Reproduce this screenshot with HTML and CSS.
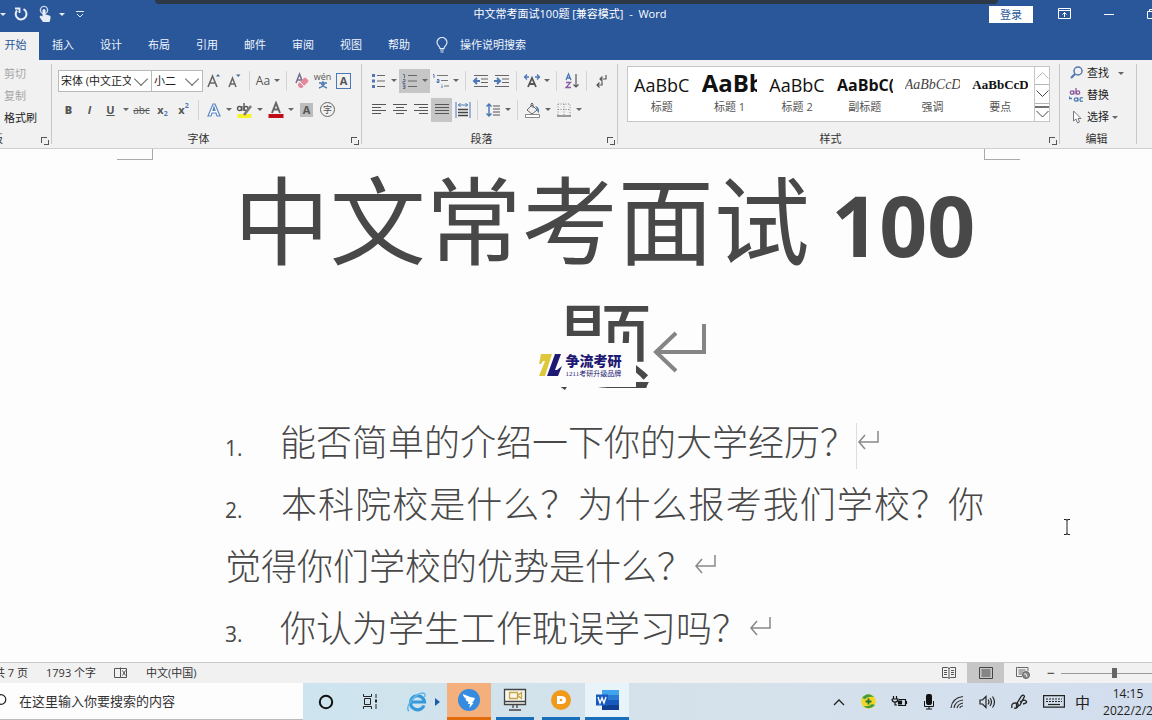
FILE: index.html
```html
<!DOCTYPE html>
<html lang="zh-CN">
<head>
<meta charset="utf-8">
<title>中文常考面试100题 - Word</title>
<link rel="stylesheet" href="styles.css">
</head>
<body>
<header class="titlebar">
  <div class="quick">
    <button class="caret" aria-label="撤消选项"></button>
    <button class="q" aria-label="重做"><svg width="16" height="16" viewBox="0 0 16 16" fill="none" stroke="#e8eef8" stroke-width="2"><path d="M10.500 3.200A5.400 5.400 0 1 1 4 4.500"/><path d="M2 2.500h4.500V7" stroke-width="1.800"/></svg></button>
    <button class="q" aria-label="触摸模式"><svg width="16" height="18" viewBox="0 0 16 18"><circle cx="7" cy="5" r="3.600" fill="none" stroke="#c6d6ee" stroke-width="1.400"/><path d="M5.500 5q1.500-2 3 0v4.500l4 1q1.500.5 1 3l-1 3.500H6l-3.500-5 1-1.500 2 1z" fill="#e8eef8"/></svg></button>
    <button class="caret" aria-label="触摸选项"></button>
    <button class="q" aria-label="自定义"><svg width="10" height="10" viewBox="0 0 10 10" fill="none" stroke="#e8eef8"><path d="M1 2.500h8M2 5l3 3 3-3"/></svg></button>
  </div>
  <h1 class="name">中文常考面试100题 [兼容模式] &nbsp;-&nbsp; Word</h1>
  <div class="winbtns">
    <button class="login">登录</button>
    <button aria-label="功能区选项"><svg width="14" height="12" viewBox="0 0 14 12" fill="none" stroke="#fff"><path d="M.5.5h12v10H.5zM.5 2.500h12M6.500 9V4.500M4.500 6.500l2-2 2 2"/></svg></button>
    <button aria-label="最小化"><svg width="12" height="12" viewBox="0 0 12 12" stroke="#fff"><path d="M1 6.500h10"/></svg></button>
    <button aria-label="还原"><svg width="12" height="12" viewBox="0 0 12 12" fill="none" stroke="#fff"><path d="M1.500 3.500h7v7h-7zM3.500 3V1.500h7v7H9"/></svg></button>
  </div>
</header>
<div class="sharebar"></div>
<nav class="tabs">
  <a href="#" class="on">开始</a><a href="#">插入</a><a href="#">设计</a><a href="#">布局</a><a href="#">引用</a><a href="#">邮件</a><a href="#">审阅</a><a href="#">视图</a><a href="#">帮助</a>
  <a href="#" class="tell"><svg width="12" height="16" viewBox="0 0 12 16" fill="none" stroke="#dfe9f7" stroke-width="1.200"><path d="M4 11.500C4 9 1 8.500 1 5.500a5 5 0 0 1 10 0C11 8.500 8 9 8 11.500zM4 13h4M4.500 15h3"/></svg>操作说明搜索</a>
</nav>

<section class="ribbon">
  <div class="group clip">
    <button class="off">剪切</button><button class="off">复制</button><button>格式刷</button>
    <div class="label"><span>剪贴板</span></div><i class="launch"></i>
  </div>

  <div class="group font">
    <div class="row">
      <div class="combo wide"><select aria-label="字体"><option>宋体 (中文正文)</option></select></div>
      <div class="combo"><select aria-label="字号"><option>小二</option></select></div>
      <button class="b" aria-label="增大字号"><svg width="18" height="18" viewBox="0 0 18 18" fill="none" stroke="#666" stroke-width="1.600"><path d="M3 15 7.500 4 12 15M5 11h5"/><path d="M11 4.500 13 2l2 2.500z" fill="#456c9c" stroke="none"/></svg></button>
      <button class="b" aria-label="减小字号"><svg width="18" height="18" viewBox="0 0 18 18" fill="none" stroke="#666" stroke-width="1.500"><path d="M3 15 6.500 6 10 15M4.500 12h4"/><path d="M10 2.500h4.500L12.300 5z" fill="#456c9c" stroke="none"/></svg></button>
      <i class="sep"></i>
      <button class="b aa">Aa</button><button class="caret" aria-label="更改大小写"></button>
      <i class="sep"></i>
      <button class="b" aria-label="清除格式"><svg width="18" height="18" viewBox="0 0 18 18"><path d="M3 11 6.500 2 10 11M4.500 8h4" fill="none" stroke="#776d8c" stroke-width="1.500"/><path d="m5 12 6-6q1-1 2 0l2 2q1 1 0 2l-6 6H7l-2-2z" fill="#e58a9c"/><path d="m7 10 4 4" stroke="#fff"/></svg></button>
      <button class="b wen" aria-label="拼音指南"><span>wén</span><svg width="10" height="8" viewBox="0 0 10 8" fill="none" stroke="#4c79b4" stroke-width="1.300"><path d="M1 2h8M5 0v2M3 2q2 4 6 5M7 2Q5 6 1 7"/></svg></button>
      <button class="b" aria-label="字符边框"><span class="boxed">A</span></button>
    </div>
    <div class="row">
      <button class="b g"><b>B</b></button><button class="b g"><em>I</em></button><button class="b g"><u>U</u></button><button class="caret" aria-label="下划线样式"></button>
      <button class="b strike"><s>abc</s></button><button class="b g">x<sub>2</sub></button><button class="b g">x<sup>2</sup></button>
      <i class="sep"></i>
      <button class="b" aria-label="文本效果"><svg width="18" height="18" viewBox="0 0 18 18"><path d="M3 15 8 3h2l5 12h-3l-1-3H7l-1 3zM8 9.500h2L9 6z" fill="#fff" stroke="#5b88c4" stroke-width="1.200"/></svg></button><button class="caret" aria-label="文本效果选项"></button>
      <button class="b" aria-label="突出显示"><svg width="18" height="18" viewBox="0 0 18 18" fill="none"><path d="M1.500 13h14v4h-14z" fill="#f7f22b"/><g stroke="#555" stroke-width="1.400"><circle cx="3.500" cy="7.500" r="2"/><path d="M5.800 5v5M8 2v8"/><circle cx="10" cy="7.500" r="2"/></g><path d="m8 14 7-9" stroke="#777" stroke-width="2.500"/></svg></button><button class="caret" aria-label="突出显示颜色"></button>
      <button class="b" aria-label="字体颜色"><svg width="18" height="18" viewBox="0 0 18 18" fill="none"><path d="M1.500 13h15v4h-15z" fill="#c00d18"/><path d="M5 12 9 2l4 10M6.500 8.500h5" stroke="#666" stroke-width="2"/></svg></button><button class="caret" aria-label="颜色选项"></button>
      <button class="b" aria-label="字符底纹"><span class="shade">A</span></button>
      <button class="b" aria-label="带圈字符"><span class="round">字</span></button>
    </div>
    <div class="label"><span>字体</span></div><i class="launch"></i>
  </div>

  <div class="group para">
    <div class="row">
      <button class="b" aria-label="项目符号"><svg width="16" height="16" viewBox="0 0 16 16"><g fill="#4c79b4"><path d="M1 1h3v3H1zM1 6.500h3v3H1zM1 12h3v3H1z"/></g><path d="M6 2.500h8M6 8h8M6 13.500h8" stroke="#666" stroke-width="1.200"/></svg></button><button class="caret" aria-label="项目符号选项"></button>
      <button class="b sel" aria-label="编号"><svg width="16" height="16" viewBox="0 0 16 16" fill="none" stroke="#5c7191"><path d="M1 1.500h1.500V5M1 6.500h2v2H1v2h2.500M1 12h2v3.500H1M1 13.700h2"/><path d="M6 2.500h9M6 8h9M6 13.500h9" stroke="#666" stroke-width="1.200"/></svg></button><button class="caret sel" aria-label="编号选项"></button>
      <button class="b" aria-label="多级列表"><svg width="18" height="16" viewBox="0 0 18 16" fill="none" stroke="#4c79b4"><path d="M1 1.500h1V5M5 6.500h2v3H5V8h2M10 11v.5M10 12.500V15"/><path d="M5 2.500h11M9 7.500h7M12 13h5" stroke="#777" stroke-width="1.200"/></svg></button><button class="caret" aria-label="多级选项"></button>
      <i class="sep"></i>
      <button class="b" aria-label="减少缩进"><svg width="18" height="14" viewBox="0 0 18 14" fill="none" stroke="#666" stroke-width="1.200"><path d="M2 1.500h14M9 5h7M9 8.500h7M2 12.500h14"/><path d="M8 7H2M5 4 2 7l3 3" stroke="#4c79b4" stroke-width="2"/></svg></button>
      <button class="b" aria-label="增加缩进"><svg width="18" height="14" viewBox="0 0 18 14" fill="none" stroke="#666" stroke-width="1.200"><path d="M2 1.500h14M9 5h7M9 8.500h7M2 12.500h14"/><path d="M1 7h6M4 4l3 3-3 3" stroke="#4c79b4" stroke-width="2"/></svg></button>
      <i class="sep"></i>
      <button class="b" aria-label="中文版式"><svg width="18" height="16" viewBox="0 0 18 16" fill="none"><path d="M5 14 9 5l4 9M6.500 11h5" stroke="#555" stroke-width="1.800"/><path d="M6 4H2M4 1.500 1.500 4 4 6.500M12 4h4M14 1.500 16.500 4 14 6.500" stroke="#4c79b4" stroke-width="1.300"/></svg></button><button class="caret" aria-label="版式选项"></button>
      <i class="sep"></i>
      <button class="b" aria-label="排序"><svg width="16" height="18" viewBox="0 0 16 18" fill="none"><path d="M2 8 4.500 2 7 8M3 6h3" stroke="#4c79b4" stroke-width="1.300"/><path d="M2 10.500h4.500L2 15.500h5" stroke="#8b5ba8" stroke-width="1.300"/><path d="M12 2v13M9.500 12.500 12 15l2.500-2.500" stroke="#555" stroke-width="1.200"/></svg></button>
      <i class="sep"></i>
      <button class="b" aria-label="显示标记"><svg width="14" height="14" viewBox="0 0 14 14" fill="none" stroke="#555" stroke-width="1.200"><path d="M11 1v4H5M7.500 2.500 5 5l2.500 2.500M7 8v3H2M4.500 8.500 2 11l2.500 2.500"/></svg></button>
    </div>
    <div class="row">
      <button class="b" aria-label="左对齐"><svg width="14" height="12" viewBox="0 0 14 12" stroke="#555"><path d="M0 .5h14M0 3.500h9M0 6.500h14M0 9.500h9"/></svg></button>
      <button class="b" aria-label="居中"><svg width="14" height="12" viewBox="0 0 14 12" stroke="#555"><path d="M0 .5h14M3 3.500h8M0 6.500h14M3 9.500h8"/></svg></button>
      <button class="b" aria-label="右对齐"><svg width="14" height="12" viewBox="0 0 14 12" stroke="#555"><path d="M0 .5h14M5 3.500h9M0 6.500h14M5 9.500h9"/></svg></button>
      <button class="b sel" aria-label="两端对齐"><svg width="14" height="12" viewBox="0 0 14 12" stroke="#555"><path d="M0 .5h14M0 3.500h14M0 6.500h14M0 9.500h14"/></svg></button>
      <button class="b" aria-label="分散对齐"><svg width="16" height="16" viewBox="0 0 16 16" fill="none" stroke="#4c79b4"><path d="M1 0v16M15 0v16M3 3h10M5.500 1l-2 2 2 2M10.500 1l2 2-2 2"/><path d="M3 7.500h10M3 10.500h10M3 13.500h10" stroke="#444" stroke-width="1.500"/></svg></button>
      <i class="sep"></i>
      <button class="b" aria-label="行距"><svg width="16" height="16" viewBox="0 0 16 16" fill="none" stroke="#4c79b4" stroke-width="1.500"><path d="M4 2v12M1.500 4.500 4 2l2.500 2.500M1.500 11.500 4 14l2.500-2.500"/><path d="M8 4h7M8 7h7M8 10h7M8 13h7" stroke="#555" stroke-width="1"/></svg></button><button class="caret" aria-label="行距选项"></button>
      <i class="sep"></i>
      <button class="b" aria-label="底纹"><svg width="18" height="16" viewBox="0 0 18 16" fill="none" stroke="#666"><path d="m3 8 5-5 5 5-5 4zM7 5V2q1-2 2 0v4"/><path d="M11 4q5 1 4 7-2-1-2-4z" fill="#4c79b4" stroke="none"/><path d="M1.500 12.500h14v3h-14z" fill="#fff" stroke="#888"/></svg></button><button class="caret" aria-label="底纹选项"></button>
      <button class="b" aria-label="边框"><svg width="14" height="14" viewBox="0 0 14 14" fill="none" stroke="#888"><path stroke-dasharray="1 1.500" d="M1 1h12v11M1 1v11M1 6.500h12M7 1v11"/><path d="M0 13h14" stroke="#444"/></svg></button><button class="caret" aria-label="边框选项"></button>
    </div>
    <div class="label"><span>段落</span></div><i class="launch"></i>
  </div>

  <div class="group styles">
    <div class="gallery">
      <button><span class="sample">AaBbC</span><span>标题</span></button>
      <button><span class="sample h1">AaBb</span><span>标题 1</span></button>
      <button><span class="sample">AaBbC</span><span>标题 2</span></button>
      <button><span class="sample bold">AaBbC(</span><span>副标题</span></button>
      <button><span class="sample ital">AaBbCcDt</span><span>强调</span></button>
      <button><span class="sample serif">AaBbCcD</span><span>要点</span></button>
      <div class="scroll">
        <button aria-label="上一行"><svg width="13" height="7" viewBox="0 0 13 7" fill="none" stroke="#bbb"><path d="m.5 6.500 6-6 6 6"/></svg></button>
        <button aria-label="下一行"><svg width="13" height="7" viewBox="0 0 13 7" fill="none" stroke="#444"><path d="m.5.5 6 6 6-6"/></svg></button>
        <button aria-label="更多"><svg width="15" height="12" viewBox="0 0 15 12" fill="none" stroke="#444"><path d="M0 1h15" stroke-width="1.500"/><path d="m1.500 5 6 6 6-6"/></svg></button>
      </div>
    </div>
    <div class="label"><span>样式</span></div><i class="launch"></i>
  </div>

  <div class="group edit">
    <button><svg width="15" height="14" viewBox="0 0 15 14" fill="none" stroke="#5279ad"><circle cx="9" cy="5" r="4" stroke-width="1.500"/><path d="m6 8-4 4" stroke-width="2.200"/></svg>查找<i class="tri"></i></button>
    <button><svg width="15" height="15" viewBox="0 0 15 15" fill="none" stroke-width="1.300"><g stroke="#8a5aa0"><circle cx="3" cy="4.500" r="1.700"/><path d="M4.800 2.500v4M7 0v6.500"/><circle cx="9" cy="4.500" r="1.700"/></g><g stroke="#4c79b4"><path d="M.5 8.500v2h2.500"/><circle cx="7" cy="11.500" r="1.700"/><path d="M8.800 9.500v4M14 10q-3-1-3 1.500t3 1.500"/></g></svg>替换</button>
    <button><svg width="15" height="14" viewBox="0 0 15 14" fill="#fff" stroke="#777"><path d="M4.500 1v10l2.500-2 1.500 4 2-1-1.500-3.500h3z"/></svg>选择<i class="tri near"></i></button>
    <div class="label"><span>编辑</span></div>
  </div>
</section>

<main class="doc">
  <div class="corners"><i></i><i></i></div>
  <h2 class="heading">中文常考面试 <b>100</b> <span class="last">题<svg class="mark" width="54" height="50" viewBox="0 0 54 50" fill="none" stroke="#858585" stroke-width="4"><path d="M51 1v28H4M23 10 3 29l20 19"/></svg><span class="brand">
      <svg width="23" height="22" viewBox="0 0 23 22"><path d="M2 0h11L6 22H0L6 7H4L2 10H0z" fill="#ddc83c"/><path d="M16 0h6l-6 16h2l5-4-4 10H8z" fill="#1e1972"/></svg>
      <span class="bt"><strong>争流考研</strong><small>1211考研升级品牌</small></span>
    </span></span></h2>
  <ol class="questions">
    <li><span class="num">1.</span>能否简单的介绍一下你的大学经历？<i class="ins"></i><svg class="ret" width="22" height="26" viewBox="0 0 22 26" fill="none" stroke="#888" stroke-width="1.500"><path d="M21 1v11H2M8 5l-6 7 6 7"/></svg></li>
    <li><span class="num">2.</span>本科院校是什么？为什么报考我们学校？你觉得你们学校的优势是什么？<svg class="ret" width="22" height="26" viewBox="0 0 22 26" fill="none" stroke="#888" stroke-width="1.500"><path d="M21 1v11H2M8 5l-6 7 6 7"/></svg></li>
    <li><span class="num">3.</span>你认为学生工作耽误学习吗？<svg class="ret" width="22" height="26" viewBox="0 0 22 26" fill="none" stroke="#888" stroke-width="1.500"><path d="M21 1v11H2M8 5l-6 7 6 7"/></svg></li>
  </ol>
  <svg class="ibeam" width="8" height="16" viewBox="0 0 8 16" fill="none" stroke="#222"><path d="M1 .5h2.500l.5 1 .5-1H7M4 1v14M1 15.500h2.500l.5-1 .5 1H7"/></svg>
</main>

<footer class="status">
  <span class="pages">共 7 页</span><span>1793 个字</span>
  <svg width="14" height="12" viewBox="0 0 14 12" fill="none" stroke="#555"><path d="M6.500 1.500H.5v9h6V.5M6.500 1.500h6v9h-6M8.500 3.500l3 5M11.500 3.500l-3 5"/></svg>
  <span>中文(中国)</span>
  <div class="views">
    <button aria-label="阅读视图"><svg width="14" height="12" viewBox="0 0 14 12" fill="none" stroke="#555"><path d="M.5.5h5l1.500 1 1.500-1h5v10h-5l-1.500 1-1.500-1h-5zM7 1v10M2 3.500h3M2 5.500h3M2 7.500h3M9 3.500h3M9 5.500h3M9 7.500h3"/></svg></button>
    <button class="sel" aria-label="页面视图"><svg width="14" height="12" viewBox="0 0 14 12" fill="none" stroke="#444"><path d="M.5.5h13v11H.5zM2.500 3h9M2.500 5h9M2.500 7h9M2.500 9h9"/></svg></button>
    <button aria-label="Web 视图"><svg width="14" height="12" viewBox="0 0 14 12" fill="none" stroke="#666"><path d="M12 4V.5H.5v9H6M2.500 3h7M2.500 5h5M2.500 7H6"/><circle cx="10" cy="8" r="3.500" fill="#888"/><path d="M8 7h2l1 3" stroke="#eee"/></svg></button>
    <button class="minus" aria-label="缩小">−</button>
    <input type="range" aria-label="缩放" value="50">
  </div>
</footer>

<div class="taskbar">
  <label class="find"><svg width="12" height="14" viewBox="0 0 12 14" fill="none" stroke="#222" stroke-width="1.200"><circle cx="6" cy="5.500" r="4.800"/><path d="m3 9-3 4"/></svg><input type="text" placeholder="在这里输入你要搜索的内容" aria-label="搜索"></label>
  <button class="app" aria-label="Cortana"><svg width="16" height="16" viewBox="0 0 16 16" fill="none" stroke="#111" stroke-width="2"><circle cx="8" cy="8" r="6.200"/></svg></button>
  <button class="app" aria-label="任务视图"><svg width="17" height="15" viewBox="0 0 17 15" fill="none" stroke="#222"><path d="M1.500 0v2.500h8V0M2.500 4.500h6v6h-6zM1.500 15v-2.500h8V15M14 0v4M14 10v5" /><path d="M14 5.500v3" stroke-width="2"/></svg></button>
  <button class="app ie" aria-label="Internet Explorer"><svg width="22" height="22" viewBox="0 0 22 22" fill="none"><path d="M18 14.500A7 7 0 1 1 18.500 11H6" stroke="#3599dc" stroke-width="3.200"/><path d="M3 20C-2 17 9 2 17 2q3 .3 1.500 4" stroke="#63b8ea" stroke-width="1.500"/></svg><svg width="5" height="8" viewBox="0 0 5 8"><path d="m0 0 5 4-5 4z" fill="#1c5ca8"/></svg></button>
  <button class="app ding" aria-label="钉钉"><svg width="22" height="22" viewBox="0 0 22 22"><circle cx="11" cy="11" r="11" fill="#348be0"/><path d="M5 5q6 3 12 4-1 3-3 5h1.500l-4 5 .5-4h-2l.5-2q-3-1-3-3h1Q5 8 5 5z" fill="#fff"/></svg></button>
  <button class="app run" aria-label="录屏"><svg width="24" height="24" viewBox="0 0 24 24" fill="none" stroke="#444" stroke-width="1.300"><path d="M1.500 1.500h21v15h-21z" fill="#f7f7ef"/><path d="M1.500 13.500h21M10 17v3M14 17v3M6 22h12"/><path d="M6.500 4.500h8v6h-8zM14.500 7.500l4-3v6l-4-3z" stroke="#c9a545"/></svg></button>
  <button class="app run" aria-label="播放器"><svg width="20" height="20" viewBox="0 0 20 20"><circle cx="10" cy="10" r="10" fill="#f09a1c"/><path d="M6 6h4q5 0 5 4t-5 4H6z" fill="#fff"/><circle cx="10" cy="10" r="1.300" fill="#f09a1c"/></svg></button>
  <button class="app run word" aria-label="Word"><svg width="23" height="20" viewBox="0 0 23 20"><path d="M6 0h17v5H6z" fill="#41a5ee"/><path d="M6 5h17v5H6z" fill="#2b7cd3"/><path d="M6 10h17v5H6z" fill="#185abd"/><path d="M6 15h17v5H6z" fill="#103f91"/><path d="M0 4.500h12v11H0z" fill="#185abd"/><path d="m2 7 2 6 2-5 2 5 2-6" fill="none" stroke="#fff" stroke-width="1.400"/></svg></button>
  <div class="tray">
    <svg width="12" height="8" viewBox="0 0 12 8" fill="none" stroke="#222" stroke-width="1.300"><path d="m1 7 5-5 5 5"/></svg>
    <svg width="15" height="15" viewBox="0 0 15 15"><circle cx="7.500" cy="7.500" r="7.300" fill="#f1d728"/><path d="M1 4Q7-3 13 3q-6-1-9 2zM14 11q-5 6-12 1 6 1 9-2z" fill="#3e9c45"/><path d="M7.500 4.500v6M4.500 7.500h6" stroke="#22732d" stroke-width="1.800"/></svg>
    <svg width="17" height="12" viewBox="0 0 17 12" fill="none" stroke="#111" stroke-width="1.200"><path d="M8 3.500h6.500v6H7M15.500 5v3M2.500 0v3M5.500 0v3M1 3h6q0 3-3 3t-3-3M4 6v3h2"/><path d="M7.500 5h3v3h-3z" fill="#111"/></svg>
    <svg width="12" height="16" viewBox="0 0 12 16" fill="#111"><rect x="3" y="0" width="6" height="11" rx="2"/><path d="M1.500 7v5.500h9V7M6 12v3M3 15h6" fill="none" stroke="#111"/></svg>
    <svg width="14" height="14" viewBox="0 0 14 14" fill="none" stroke="#333" stroke-width="1.200"><path d="M1 13Q2 3 13 1.500M4 13q1-7 9-8M7 13q1-4 6-5M10 13q0-2 3-2"/></svg>
    <svg width="17" height="14" viewBox="0 0 17 14" fill="none" stroke="#222" stroke-width="1.200"><path d="M1 5h2.500L7 1.500v11L3.500 9H1zM9 4.500q2 2.500 0 5M11 3q3 4 0 8M13.500 1.500q4 5.500 0 11"/></svg>
    <svg width="17" height="16" viewBox="0 0 17 16" fill="none" stroke="#222" stroke-width="1.300"><path d="m5.500 10 5-8q2-2 3 .5L9 11l-3.500 2zM1 14q-1-5 3-5t3 3-4 2M9 8q4-3 6-1t-3 3"/></svg>
    <svg class="kb" width="22" height="13" viewBox="0 0 22 13" fill="none" stroke="#222" stroke-width="1.200"><path d="M.6.6h20.800v11.500H.6z"/><path d="M3 4h16M3 6.500h16" stroke-dasharray="2 1"/><path d="M5 9.500h12"/></svg>
    <span class="ime">中</span>
    <time>14:15<br>2022/2/2</time>
  </div>
</div>
</body>
</html>
```

FILE: styles.css
```css
* { box-sizing: border-box; }
html, body { height: 100%; }
body {
  margin: 0;
  display: flex;
  flex-direction: column;
  overflow: hidden;
  background: #fdfdfd;
  color: #333;
  font: 11px/16px "Open Sans", "Noto Sans CJK SC", sans-serif;
}
button, select, input { font: inherit; color: inherit; }
button { border: 0; padding: 0; background: none; white-space: nowrap; }
svg { flex: none; display: block; }
a { color: inherit; text-decoration: none; }

/* title bar */
.titlebar {
  display: flex;
  align-items: center;
  height: 32px;
  padding-bottom: 4px;
  background: #2a579a;
  color: #fff;
}
.quick { flex: 1; display: flex; align-items: center; margin-left: -2px; }
.q { display: flex; justify-content: center; width: 24px; }
.quick .caret { margin-right: 1px; }
.name { margin: 0; padding-right: 16px; font-size: 11px; font-weight: 400; }
.winbtns { flex: 1; display: flex; justify-content: flex-end; align-items: center; gap: 31px; margin-right: -6px; }
.login { width: 44px; height: 17px; margin-right: -6px; background: #fff; color: #2a579a; line-height: 17px; }
.sharebar {
  position: absolute;
  top: 0;
  left: 155px;
  right: 154px;
  height: 4px;
  border-radius: 0 0 4px 4px;
  background: #2d3a46;
}

.caret { display: flex; justify-content: center; align-items: center; width: 10px; height: 21px; flex: none; }
.caret::after, .tri {
  content: "";
  border: 3px solid transparent;
  border-top-color: #666;
  border-bottom: 0;
}
.quick .caret::after { border-top-color: #e8eef8; }

/* tabs */
.tabs { display: flex; height: 28px; background: #2a579a; color: #f0f5fc; flex: none; }
.tabs a { width: 48px; line-height: 25px; text-align: center; }
.tabs .on { width: 39px; padding-right: 8px; background: #f1f1f1; color: #2a579a; }
.tabs .tell { display: flex; align-items: center; gap: 12px; width: auto; margin-left: 13px; padding-bottom: 3px; }

/* ribbon */
.ribbon {
  display: flex;
  flex: none;
  height: 89px;
  padding-top: 4px;
  background: #f1f1f1;
  border-bottom: 1px solid #cfcfcf;
}
.group { position: relative; display: flex; flex-direction: column; border-right: 1px solid #c8c8c8; height: 80px; }
.label { margin-top: auto; margin-bottom: -3px; text-align: center; }
.launch {
  position: absolute;
  right: 4px;
  bottom: 1px;
  width: 6px;
  height: 6px;
  border: 1px solid #555;
  border-right: 0;
  border-bottom: 0;
}
.launch::after { content: ""; position: absolute; left: 2px; top: 2px; width: 4px; height: 4px; border: solid #555; border-width: 0 1px 1px 0; }
.clip { width: 52px; align-items: flex-start; padding-left: 4px; flex: none; }
.clip button { height: 22px; line-height: 18px; padding-bottom: 3px; color: #222; }
.clip .off { color: #a5a5a5; }
.clip .label { margin-left: -34px; }
.font { width: 310px; padding-left: 6px; flex: none; }
.para { width: 256px; padding-left: 6px; flex: none; }
.font .label, .para .label { padding-right: 22px; }
.styles { flex: 1; min-width: 0; padding: 2px 9px 0; }
.styles .label { padding-right: 16px; }
.edit { width: 77px; margin-right: 15px; padding-left: 9px; flex: none; }
.row { display: flex; align-items: center; height: 28px; padding-top: 5px; }
.row + .row { height: 30px; }
.b { display: flex; justify-content: center; align-items: center; width: 21px; height: 24px; flex: none; color: #555; }
.sel { background: #c6c6c6; height: 24px; }
.sep { width: 1px; height: 20px; margin: 0 4px; background: #d5d5d5; flex: none; }
.combo { width: 52px; height: 22px; position: relative; background: #fff; border: 1px solid #b9b9b9; }
.combo.wide { width: 93px; border-right: 0; }
.combo::after {
  content: "";
  position: absolute;
  right: 5px;
  top: 3px;
  width: 9px;
  height: 9px;
  border: solid #666;
  border-width: 0 1px 1px 0;
  transform: rotate(45deg);
}
.combo select { appearance: none; width: calc(100% - 20px); height: 20px; padding: 0 0 0 2px; border: 0; background: none; display: block; overflow: hidden; text-overflow: clip; color: #222; }
.aa { width: 18px; font-size: 12px; }
.wen { flex-direction: column; font-size: 9px; line-height: 9px; }
.boxed { width: 15px; border: 1px solid #4c79b4; font-weight: 700; line-height: 14px; }
.shade { width: 13px; background: #bdbdbd; font-weight: 700; line-height: 14px; }
.round { width: 15px; border: 1px solid #666; border-radius: 50%; font-size: 9px; line-height: 13px; }
.g { font-weight: 700; font-size: 11px; align-items: center; }
.g sub, .g sup { font-size: 7px; line-height: 7px; color: #4c79b4; }
.g sub { margin-top: 8px; }
.g sup { margin-bottom: 8px; }
.strike { font-size: 10px; }

.gallery { display: flex; height: 56px; background: #fff; border: 1px solid #c6c6c6; }
.gallery > button { flex: 1; min-width: 0; padding: 0 6px; display: flex; flex-direction: column; color: #555; overflow: hidden; }
.gallery > button > span { width: 100%; line-height: 16px; }
.gallery .sample { height: 32px; padding-top: 2px; line-height: 32px; font-size: 18px; color: #111; text-align: left; overflow: hidden; }
.gallery .h1 { font-size: 24px; font-weight: 700; line-height: 28px; }
.gallery .bold { font-size: 16px; font-weight: 700; }
.gallery .ital { font: italic 14px/32px "Liberation Serif", serif; color: #444; }
.gallery .serif { font: bold 13px/32px "Liberation Serif", serif; }
.scroll { display: flex; flex-direction: column; width: 15px; border-left: 1px solid #c6c6c6; }
.scroll button { flex: 1; display: flex; justify-content: center; align-items: center; overflow: hidden; }
.scroll button + button { border-top: 1px solid #b5b5b5; }
.edit button { display: flex; align-items: center; gap: 3px; height: 22px; padding-bottom: 4px; color: #222; }
.tri { margin-left: 6px; }
.tri.near { margin-left: 0; }
.edit .label { padding-right: 12px; }

/* document */
.doc { position: relative; flex: 1; min-height: 0; overflow: hidden; padding: 0 168px 0 153px; color: #484848; }
.corners { display: flex; justify-content: space-between; height: 11px; margin: 0 -36px; }
.corners i { width: 36px; height: 11px; border: solid #aaa; border-width: 0 1px 1px 0; }
.corners i + i { border-width: 0 0 1px 1px; }
.heading {
  margin: -7px 0 0 72px;
  text-align: center;
  font: 400 96px/125px "Noto Sans CJK SC", sans-serif;
}
.heading b { font-family: "Open Sans", sans-serif; font-size: 84px; line-height: 1; }
.last { position: relative; display: inline-block; }
.mark { position: absolute; left: 96px; top: 45px; }
.brand {
  position: absolute;
  left: -20px;
  top: 65px;
  display: flex;
  align-items: center;
  gap: 4px;
  width: 99px;
  height: 44px;
  padding-left: 2px;
  background: #fdfdfd;
  color: #1e1972;
  text-align: left;
}
.bt { display: flex; flex-direction: column; white-space: nowrap; }
.bt strong { font-size: 14px; line-height: 18px; font-weight: 900; }
.bt small { font-size: 7px; line-height: 10px; font-family: "Liberation Serif", "Noto Sans CJK SC", serif; }
.questions {
  margin: 6px 0 0 72px;
  padding: 0;
  list-style: none;
  text-align: justify;
  font: 300 36px/62px "Noto Sans CJK SC", sans-serif;
}
.num { display: inline-block; width: 55px; font: 400 21px/21px "Open Sans", sans-serif; }
.ret { display: inline-block; margin-left: 1px; vertical-align: 0; }
.ins { display: inline-block; width: 1px; height: 46px; margin-right: -1px; background: #ddd; vertical-align: middle; }
.ibeam { position: absolute; right: 81px; top: 370px; }

/* status bar */
.status { display: flex; align-items: center; gap: 18px; flex: none; height: 21px; background: #f1f1f1; border-top: 1px solid #c8c8c8; overflow: hidden; }
.pages { margin-left: -6px; }
.views { display: flex; align-items: center; margin-left: auto; margin-right: -15px; }
.views button { display: flex; justify-content: center; align-items: center; width: 37px; height: 20px; }
.views .minus { width: 20px; font-size: 14px; }
.views input { appearance: none; width: 106px; height: 20px; margin: 0; background: linear-gradient(#999, #999) center / 100% 1px no-repeat; }
.views input::-webkit-slider-thumb { appearance: none; width: 5px; height: 10px; background: #666; }

/* taskbar */
.taskbar { display: flex; flex: none; height: 37px; background: linear-gradient(90deg, #cde4ee 26%, #d5e1ea 60%, #d2deee); color: #222; overflow: hidden; }
.find { display: flex; align-items: center; gap: 12px; width: 303px; margin-right: 1px; background: #fdfdfd; border-bottom: 1px solid #bbb; flex: none; }
.find svg { margin-left: -5px; }
.find input { width: 240px; padding: 0; border: 0; background: none; font-size: 13px; outline: 0; }
.find input::placeholder { color: #333; opacity: 1; }
.app { display: flex; justify-content: center; align-items: center; width: 44px; flex: none; }
.app.ie { width: 55px; gap: 7px; padding-left: 7px; }
.app.ding { background: #f4b07c; border-bottom: 3px solid #e36c0a; }
.app.run { border-bottom: 3px solid #1a6fbb; width: 38px; margin-left: 5px; }
.app.run + .run { margin-left: 8px; }
.app.run + .word { width: 44px; margin-left: 5px; background: #e9f3fa; }
.tray { display: flex; align-items: center; gap: 15px; margin-left: auto; margin-right: -1px; }
.tray svg:first-child { margin-right: 1px; }
.ime { margin-left: -5px; font-size: 15px; }
.tray time { width: 56px; margin: 0 -3px 0 -5px; font-size: 12px; line-height: 17px; text-align: center; white-space: nowrap; }
```
